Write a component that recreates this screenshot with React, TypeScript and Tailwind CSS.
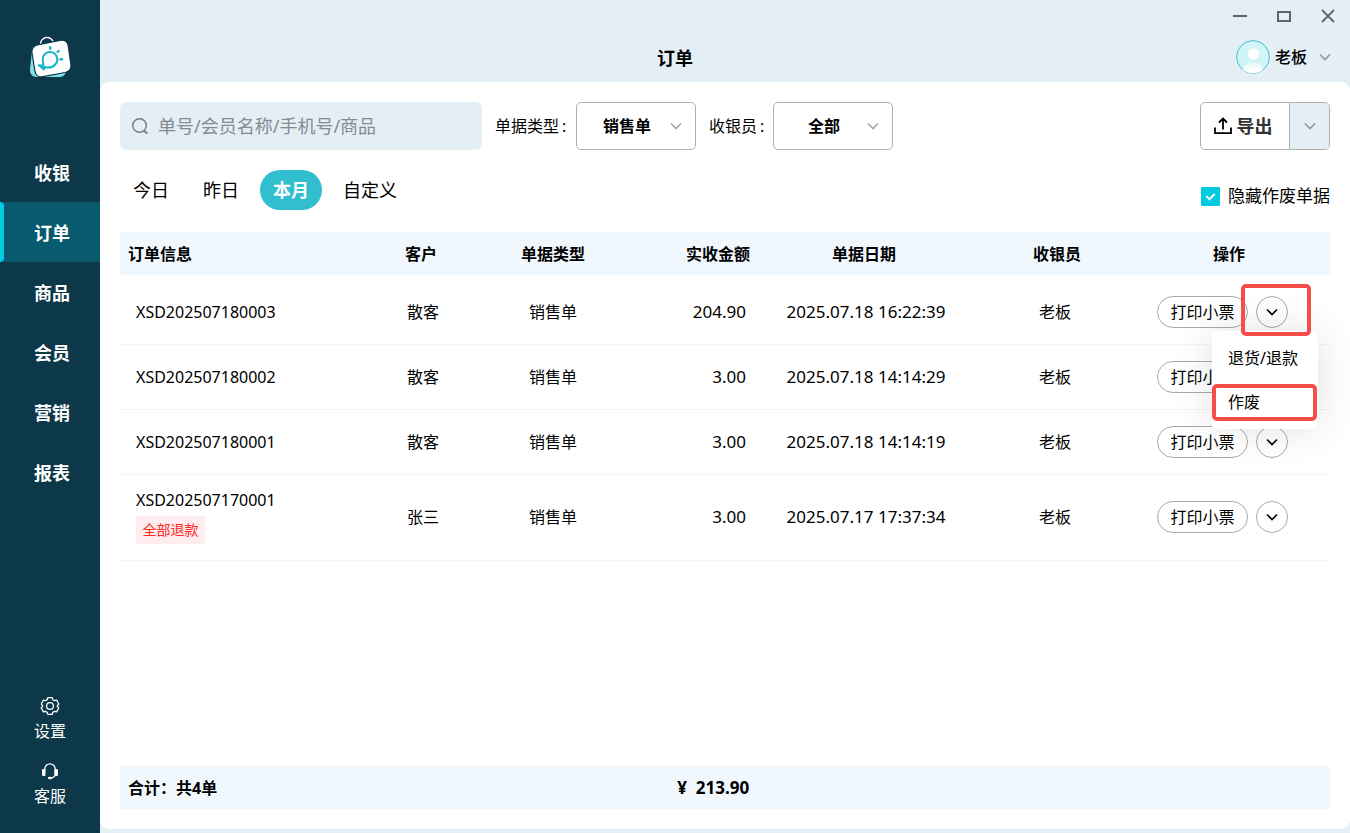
import { useState } from "react";

const FONT = "font-['Noto_Sans','Noto_Sans_CJK_SC',sans-serif]";

const NAV = ["收银", "订单", "商品", "会员", "营销", "报表"];
const TABS = ["今日", "昨日", "本月", "自定义"];

const ORDERS = [
  { id: "XSD202507180003", customer: "散客", type: "销售单", amount: "204.90", date: "2025.07.18 16:22:39", cashier: "老板" },
  { id: "XSD202507180002", customer: "散客", type: "销售单", amount: "3.00", date: "2025.07.18 14:14:29", cashier: "老板" },
  { id: "XSD202507180001", customer: "散客", type: "销售单", amount: "3.00", date: "2025.07.18 14:14:19", cashier: "老板" },
  { id: "XSD202507170001", customer: "张三", type: "销售单", amount: "3.00", date: "2025.07.17 17:37:34", cashier: "老板", tag: "全部退款" },
];

function Chevron({ className = "" }: { className?: string }) {
  return (
    <svg viewBox="0 0 12 12" className={`h-3 w-3 ${className}`} fill="none" stroke="currentColor" strokeWidth="1.6">
      <path d="M1 3.5 6 8.5 11 3.5" />
    </svg>
  );
}

function Logo() {
  return (
    <svg viewBox="0 0 44 44" className="h-11 w-11" fill="none">
      <path d="M12.500 9.500a6.600 6.600 0 0 1 13-2" stroke="#fff" strokeWidth="1.400" />
      <path d="M4.500 12 2 33.500c-.5 5 2 8.500 7 8.500h22.500c3 0 5-1.500 6-4z" fill="#7fdfe6" />
      <path
        d="M10.500 9.700 32 5.400c4.500-.8 7.300 1 8.200 5.200l2.700 18.700c.6 4.400-1.500 7.200-5.700 8.200l-22.500 4.200c-4.200.8-7-1.200-7.700-5.400L4 18c-.6-4.400 2-7.400 6.500-8.300z"
        fill="#fff"
        stroke="#0c3849"
        strokeWidth="1.200"
      />
      <g stroke="#17b5c9" strokeWidth="2" strokeLinecap="round" strokeLinejoin="round">
        <path d="M15.200 30.800l-4.500-.6 5.300 4.300.2-2.500c4.500 1 8.500.6 11-2.500a7.300 7.300 0 1 0-12.400-4.200c.1 1.500.6 3.300.4 5.500z" />
        <path d="M22.200 12.200v1.500M30.600 16l-1 1M32.500 24.300h1.500" strokeWidth="2.400" />
      </g>
    </svg>
  );
}

function SettingsIcon() {
  return (
    <svg viewBox="0 0 20 20" className="h-5 w-5" fill="none" stroke="currentColor" strokeWidth="1.300" strokeLinejoin="round">
      <path d="M7.800 1.700h4.400l.7 2 1.600.9 2.100-.4 2.200 3.800-1.400 1.600v.8l1.400 1.600-2.200 3.800-2.100-.4-1.600.9-.7 2H7.800l-.7-2-1.600-.9-2.100.4L1.200 12l1.400-1.600v-.8L1.200 8l2.200-3.800 2.100.4 1.600-.9z" />
      <circle cx="10" cy="10" r="3.400" />
    </svg>
  );
}

function HeadsetIcon() {
  return (
    <svg viewBox="0 0 20 20" className="h-5 w-5" fill="none" stroke="currentColor" strokeWidth="1.300">
      <path d="M4.800 9V8a5.200 5.200 0 0 1 10.400 0v4.500c0 2.500-1.500 4.200-4 4.500" />
      <rect x="2" y="8" width="3.500" height="7" rx="1.200" fill="currentColor" stroke="none" />
      <rect x="14.500" y="8" width="3.500" height="7" rx="1.200" fill="currentColor" stroke="none" />
      <ellipse cx="10" cy="17" rx="2.200" ry="1.300" fill="currentColor" stroke="none" />
    </svg>
  );
}

function Sidebar() {
  return (
    <aside className="flex w-[100px] shrink-0 flex-col items-center bg-[#0c3849] text-white">
      <div className="pt-[35px]">
        <Logo />
      </div>
      <nav className="mt-[63px] flex w-full flex-col">
        {NAV.map((item) => (
          <a
            key={item}
            href="#"
            className={`relative flex h-[60px] items-center justify-center pt-[2px] pl-1 text-lg font-bold ${item === "订单" ? "bg-[#085a6e]" : ""}`}
          >
            {item === "订单" && <span className="absolute inset-y-0 left-0 w-1 rounded-r bg-[#00cbe3]" />}
            {item}
          </a>
        ))}
      </nav>
      <div className="mt-auto flex flex-col items-center gap-[18px] pb-[25px] leading-6">
        <button className="flex flex-col items-center gap-[3px]">
          <SettingsIcon />
          设置
        </button>
        <button className="flex flex-col items-center gap-[3px]">
          <HeadsetIcon />
          客服
        </button>
      </div>
    </aside>
  );
}

function TopBar() {
  return (
    <header className="relative flex h-[82px] justify-end">
      {/* title is centred on the whole window, sidebar included */}
      <h1 className="absolute inset-x-0 bottom-[10px] mr-[100px] text-center text-lg font-bold">订单</h1>
      <div className="relative flex flex-col items-end">
        <div className="flex h-8 items-center gap-[28px] pr-[14px] text-[#5f676b]">
          <button aria-label="最小化">
            <svg viewBox="0 0 16 16" className="h-4 w-4" stroke="currentColor" strokeWidth="2">
              <path d="M1 8h14" />
            </svg>
          </button>
          <button aria-label="最大化">
            <svg viewBox="0 0 16 16" className="h-4 w-4" fill="none" stroke="currentColor" strokeWidth="2">
              <path d="M2 4h12v9H2z" />
            </svg>
          </button>
          <button aria-label="关闭">
            <svg viewBox="0 0 16 16" className="h-4 w-4" stroke="currentColor" strokeWidth="1.800">
              <path d="m2 2 12 12M14 2 2 14" />
            </svg>
          </button>
        </div>
        <button className="mt-2 flex items-center pr-[19px]">
          <svg viewBox="0 0 34 34" className="h-[34px] w-[34px]">
            <defs>
              <linearGradient id="shoulders" x1="0" y1="0" x2="0" y2="1">
                <stop offset="0" stopColor="#e0f8fa" />
                <stop offset=".7" stopColor="#fff" />
              </linearGradient>
            </defs>
            <circle cx="17" cy="17" r="16.400" fill="#d0f4f8" stroke="#3fc1cf" />
            <circle cx="17.500" cy="14" r="5.500" fill="#fff" />
            <path d="M7 29.800c1-5 5-7.300 10-7.300s9 2.300 10 7.300a16 16 0 0 1-20 0z" fill="url(#shoulders)" />
          </svg>
          <span className="ml-[5px] font-medium">老板</span>
          <Chevron className="ml-3 text-[#8f989c]" />
        </button>
      </div>
    </header>
  );
}

function FilterSelect({ id, label, value }: { id: string; label: string; value: string }) {
  return (
    <div className="ml-[13px] flex items-center">
      <label htmlFor={id} className="flex w-[81px] items-center data-[short=true]:w-16" data-short={label.length < 4}>
        {label}
        <span className="ml-[3px]">:</span>
      </label>
      <div className="relative">
        <select
          id={id}
          className="h-12 w-[120px] appearance-none rounded-[5px] border border-[#b0b0b0] bg-white pr-[18px] text-center font-bold [text-align-last:center]"
        >
          <option>{value}</option>
        </select>
        <Chevron className="pointer-events-none absolute top-[18px] right-[14px] text-[#a5a5a5]" />
      </div>
    </div>
  );
}

function RowMenu() {
  return (
    <>
      <div className="absolute top-[35px] left-[-44px] z-10 w-[106px] rounded-sm bg-white pt-[5px] pb-1 shadow-[0_0_40px_rgba(0,0,0,0.12)]">
        <button className="block h-11 w-full pl-4 text-left whitespace-nowrap">退货/退款</button>
        <div className="relative">
          <button className="block h-[45px] w-full pl-4 text-left">作废</button>
          <span className="pointer-events-none absolute top-1 left-0 h-[37px] w-[105px] rounded-[5px] border-4 border-[#f64c4a]" />
        </div>
      </div>
      <span className="pointer-events-none absolute top-[-12px] left-[-15px] z-20 h-[52px] w-[70px] rounded-[5px] border-4 border-[#f64c4a]" />
    </>
  );
}

export default function App() {
  const [tab, setTab] = useState("本月");

  return (
    <div className={`flex min-h-screen bg-[#e3eef5] text-base text-black ${FONT}`}>
      <Sidebar />
      <div className="flex min-w-0 flex-1 flex-col pb-1">
        <TopBar />
        <main className="flex flex-1 flex-col rounded-[9px] bg-white p-5">
          <div className="flex items-center">
            <div className="flex h-12 w-[362px] items-center rounded-md border border-[#e6f3fa] bg-[#e3eef5] px-[10px]">
              <svg viewBox="0 0 18 18" className="h-[18px] w-[18px] shrink-0" fill="none" stroke="#777f84" strokeWidth="1.500">
                <circle cx="8.500" cy="8.500" r="6.800" />
                <path d="m12.800 13.500 3.500 3" strokeWidth="2" />
              </svg>
              <input
                aria-label="搜索"
                placeholder="单号/会员名称/手机号/商品"
                className="ml-[9px] w-full min-w-0 bg-transparent text-lg outline-none placeholder:text-[#858b90]"
              />
            </div>
            <FilterSelect id="bill-type" label="单据类型" value="销售单" />
            <FilterSelect id="cashier" label="收银员" value="全部" />
            <div className="ml-auto flex h-12 w-[130px] overflow-hidden rounded-[5px] border border-[#b0b0b0]">
              <button className="flex flex-1 items-center justify-center gap-[5px] pr-1 text-lg font-bold text-[#333]">
                <svg viewBox="0 0 18 18" className="h-[18px] w-[18px]" fill="none" stroke="#000" strokeWidth="1.800">
                  <path d="M1 10.500v5.700h16v-5.700M9 12.500V2M5 5.500l4-4 4 4" />
                </svg>
                导出
              </button>
              <button aria-label="更多导出" className="flex w-10 items-center justify-center border-l border-[#b0b0b0] bg-[#e3eef5] text-[#8f989c]">
                <Chevron />
              </button>
            </div>
          </div>

          <div className="mt-5 flex items-center">
            <div className="flex gap-2 text-lg">
              {TABS.map((t) => (
                <button
                  key={t}
                  onClick={() => setTab(t)}
                  className={`h-10 rounded-full px-[13px] ${t === tab ? "bg-[#31becf] font-bold text-white" : ""}`}
                >
                  {t}
                </button>
              ))}
            </div>
            <label className="relative mt-3 ml-auto flex items-center gap-2 text-[17px]">
              <input type="checkbox" defaultChecked className="peer h-[19px] w-[19px] appearance-none rounded-[1px] border border-[#00cbe3] checked:bg-[#00cbe3]" />
              <svg viewBox="0 0 18 18" className="pointer-events-none absolute left-0 hidden h-[19px] w-[19px] peer-checked:block" fill="none" stroke="#fff" strokeWidth="1.800">
                <path d="m5 8.500 3 3.200 5-5.200" />
              </svg>
              隐藏作废单据
            </label>
          </div>

          <table className="mt-[22px] w-full table-fixed">
            <colgroup>
              <col className="w-[238px]" />
              <col className="w-[126px]" />
              <col className="w-[138px]" />
              <col className="w-[136px]" />
              <col className="w-[212px]" />
              <col className="w-[174px]" />
              <col className="w-[186px]" />
            </colgroup>
            <thead>
              <tr className="h-[43px] bg-[#f0f8fe]">
                <th className="pl-2 text-left">订单信息</th>
                <th>客户</th>
                <th>单据类型</th>
                <th className="pr-2 text-right">实收金额</th>
                <th>单据日期</th>
                <th>收银员</th>
                <th className="pr-4">操作</th>
              </tr>
            </thead>
            <tbody>
              {ORDERS.map((o, i) => (
                <tr
                  key={o.id}
                  className={`border-b border-[#f1f4f8] text-center ${i === 0 ? "h-[69px] [&>td]:pt-[5px]" : o.tag ? "h-[86px]" : "h-[65px]"}`}
                >
                  <td className="pl-4 text-left">
                    {o.id}
                    {o.tag && (
                      <div className="mt-1 mb-[2px] flex h-7 w-[69px] items-center justify-center bg-[#ffecee] text-sm text-[#ff2a1f]">{o.tag}</div>
                    )}
                  </td>
                  <td className="pl-1">{o.customer}</td>
                  <td>{o.type}</td>
                  <td className="pr-3 text-right text-[17px]">{o.amount}</td>
                  <td className="pl-1 text-[17px]">{o.date}</td>
                  <td className="pr-1">{o.cashier}</td>
                  <td>
                    <div className="flex gap-2 pl-[13px]">
                      <button className="h-8 w-[91px] rounded-full border border-[#aaa]">打印小票</button>
                      <div className="relative">
                        <button aria-label="更多操作" className="flex h-8 w-8 items-center justify-center rounded-full border border-[#aaa]">
                          <Chevron />
                        </button>
                        {i === 0 && <RowMenu />}
                      </div>
                    </div>
                  </td>
                </tr>
              ))}
            </tbody>
          </table>

          <div className="mt-auto flex h-[43px] items-center bg-[#f0f8fe] px-2 font-bold">
            <span className="w-[46%]">合计：共4单</span>
            <span className="text-[17px]">¥&nbsp; 213.90</span>
          </div>
        </main>
      </div>
    </div>
  );
}
